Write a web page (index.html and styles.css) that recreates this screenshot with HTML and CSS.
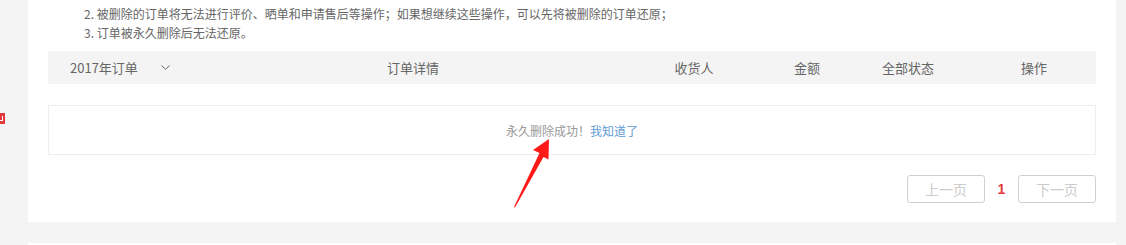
FILE: index.html
```html
<!DOCTYPE html>
<html lang="zh-CN">
<head>
<meta charset="utf-8">
<title>订单回收站</title>
<link rel="stylesheet" href="styles.css">
</head>
<body>
<div class="page">
  <div class="gutter"><span class="badge"><i class="badge-mark"></i></span></div>
  <div class="main">
    <div class="panel">
      <ol class="tips" start="2">
        <li>被删除的订单将无法进行评价、晒单和申请售后等操作；如果想继续这些操作，可以先将被删除的订单还原；</li>
        <li>订单被永久删除后无法还原。</li>
      </ol>
      <div class="thead">
        <div class="th th-first">2017年订单<svg class="chev" width="9" height="5" viewBox="0 0 9 5"><path d="M0.5 0.5 L4.5 4.3 L8.5 0.5" fill="none" stroke="#666" stroke-width="1"/></svg></div>
        <div class="th">订单详情</div>
        <div class="th">收货人</div>
        <div class="th">金额</div>
        <div class="th">全部状态</div>
        <div class="th">操作</div>
      </div>
      <div class="empty">永久删除成功！<a class="link" href="#">我知道了</a></div>
      <div class="pager">
        <span class="pbtn">上一页</span>
        <span class="pcur">1</span>
        <span class="pbtn">下一页</span>
      </div>
      <svg class="arrow" width="60" height="80" viewBox="0 0 60 80">
        <path d="M49 0 L33 11 L39.5 14 L14 68 L15 68.5 L43.5 18 L48.5 20.5 Z" fill="#ff1a1a"/>
      </svg>
    </div>
    <div class="panel2"></div>
  </div>
</div>
</body>
</html>
```
FILE: styles.css
```css
html, body {
  margin: 0;
  padding: 0;
  background: #f4f4f4;
  font-family: "Noto Sans CJK SC", "Microsoft YaHei", sans-serif;
  font-size: 12px;
  color: #666;
}
.page {
  display: flex;
  width: 1126px;
}
.gutter {
  width: 28px;
  flex: none;
}
.badge {
  display: block;
  width: 5px;
  height: 11px;
  margin-top: 113px;
  background: #e4393c;
  position: relative;
  overflow: hidden;
}
.badge-mark {
  position: absolute;
  left: 0;
  top: 3px;
  width: 2px;
  height: 4px;
  border-right: 1px solid #fff;
  border-bottom: 1px solid #fff;
}
.main {
  width: 1088px;
  flex: none;
}
.panel {
  background: #fff;
  padding: 4px 20px 19px;
  position: relative;
}
.tips {
  margin: 0;
  padding: 0 0 0 36px;
  list-style: none;
  counter-reset: tip 1;
  line-height: 19px;
}
.tips li {
  counter-increment: tip;
}
.tips li::before {
  content: counter(tip) ". ";
}
.thead {
  margin-top: 9px;
  height: 33px;
  background: #f4f4f4;
  display: grid;
  grid-template-columns: 160px 410px 152px 74px 128px 124px;
  align-items: center;
  font-size: 13px;
  color: #666;
}
.th {
  text-align: center;
  line-height: 33px;
}
.th-first {
  text-align: left;
  padding-left: 22px;
  display: flex;
  align-items: center;
}
.chev {
  margin-left: 23px;
  margin-top: -1px;
}
.empty {
  margin-top: 21px;
  height: 48px;
  border: 1px solid #ededed;
  display: flex;
  align-items: center;
  justify-content: center;
  color: #999;
}
.link {
  color: #5f9bd3;
  text-decoration: none;
}
.pager {
  margin-top: 20px;
  display: flex;
  justify-content: flex-end;
  align-items: center;
}
.pbtn {
  box-sizing: border-box;
  width: 78px;
  height: 28px;
  border: 1px solid #d0d0d0;
  border-radius: 3px;
  color: #ccc;
  font-size: 14px;
  display: flex;
  align-items: center;
  justify-content: center;
}
.pcur {
  width: 33px;
  text-align: center;
  color: #e4393c;
  font-weight: bold;
  font-size: 14px;
  font-family: "Liberation Sans", Arial, sans-serif;
}
.arrow {
  position: absolute;
  left: 472px;
  top: 139px;
}
.panel2 {
  margin-top: 21px;
  height: 40px;
  background: #fff;
}
```
